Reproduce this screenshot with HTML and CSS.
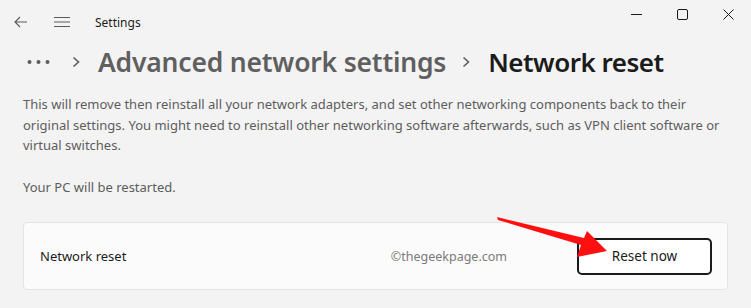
FILE: index.html
```html
<!DOCTYPE html>
<html lang="en">
<head>
<meta charset="utf-8">
<title>Settings</title>
<link rel="stylesheet" href="styles.css">
</head>
<body>
<div class="window">
  <header class="titlebar">
    <button class="tb-btn back" aria-label="Back">
      <svg width="14" height="12" viewBox="0 0 14 12"><path d="M6 1 L1 6 L6 11 M1 6 H13" fill="none" stroke="#5a5a5a" stroke-width="1.1"/></svg>
    </button>
    <button class="tb-btn menu" aria-label="Menu">
      <svg width="16" height="12" viewBox="0 0 16 12"><path d="M0 1.5 H16 M0 6 H16 M0 10.5 H16" fill="none" stroke="#5a5a5a" stroke-width="1.1"/></svg>
    </button>
    <span class="app-title">Settings</span>
    <div class="controls">
      <span class="ctl"><svg width="11" height="11" viewBox="0 0 11 11"><path d="M0 5.5 H11" stroke="#1a1a1a" stroke-width="1"/></svg></span>
      <span class="ctl"><svg width="11" height="11" viewBox="0 0 11 11"><rect x="0.5" y="0.5" width="10" height="10" rx="1.5" fill="none" stroke="#1a1a1a" stroke-width="1"/></svg></span>
      <span class="ctl"><svg width="11" height="11" viewBox="0 0 11 11"><path d="M0.5 0.5 L10.5 10.5 M10.5 0.5 L0.5 10.5" stroke="#1a1a1a" stroke-width="1"/></svg></span>
    </div>
  </header>

  <nav class="crumbs">
    <span class="more" aria-label="More">
      <svg width="24" height="6" viewBox="0 0 24 6"><circle cx="2.5" cy="3" r="2" fill="#5c5c5c"/><circle cx="11.5" cy="3" r="2" fill="#5c5c5c"/><circle cx="20.5" cy="3" r="2" fill="#5c5c5c"/></svg>
    </span>
    <span class="chev">
      <svg width="8" height="12" viewBox="0 0 8 12"><path d="M1.5 1.5 L6.5 6 L1.5 10.5" fill="none" stroke="#5c5c5c" stroke-width="1.6"/></svg>
    </span>
    <span class="crumb">Advanced network settings</span>
    <span class="chev">
      <svg width="8" height="12" viewBox="0 0 8 12"><path d="M1.5 1.5 L6.5 6 L1.5 10.5" fill="none" stroke="#5c5c5c" stroke-width="1.6"/></svg>
    </span>
    <span class="crumb current">Network reset</span>
  </nav>

  <main class="content">
    <p class="desc">This will remove then reinstall all your network adapters, and set other networking components back to their original settings. You might need to reinstall other networking software afterwards, such as VPN client software or virtual switches.</p>
    <p class="desc restart">Your PC will be restarted.</p>

    <section class="card">
      <span class="card-label">Network reset</span>
      <span class="watermark">©thegeekpage.com</span>
      <button class="reset-btn">Reset now</button>
    </section>
  </main>

  <svg class="annot" width="751" height="308" viewBox="0 0 751 308" aria-hidden="true">
    <polygon points="497,217 584,238 587,231 607,251 577,257 581,245 498,220" fill="#ff1010"/>
  </svg>
</div>
</body>
</html>
```

FILE: styles.css
```css
* { box-sizing: border-box; }
html, body { margin: 0; padding: 0; }
body {
  background: #f3f3f3;
  font-family: "Noto Sans", "Open Sans", sans-serif;
  color: #1b1b1b;
  width: 751px;
  height: 308px;
  overflow: hidden;
}
.window { position: relative; width: 751px; height: 308px; }

.titlebar {
  display: flex;
  align-items: center;
  height: 44px;
  padding-left: 8px;
}
.tb-btn {
  border: 0;
  background: transparent;
  padding: 0;
  display: flex;
  align-items: center;
  justify-content: center;
  height: 28px;
}
.back { width: 26px; }
.menu { width: 24px; margin-left: 16px; }
.app-title {
  margin-left: 21px;
  font-size: 12px;
  color: #1b1b1b;
}
.controls {
  margin-left: auto;
  display: flex;
  align-self: flex-start;
  height: 28px;
}
.ctl {
  width: 46px;
  height: 28px;
  display: flex;
  align-items: center;
  justify-content: center;
}

.crumbs {
  display: flex;
  align-items: center;
  height: 36px;
  padding-left: 27px;
}
.more {
  display: flex;
  align-items: center;
  width: 45px;
}
.chev { display: flex; align-items: center; width: 26px; }
.crumb {
  font-size: 26.5px;
  font-weight: 600;
  color: #5f5f5f;
  margin-right: 16px;
  letter-spacing: -0.2px;
}
.crumb.current { color: #1b1b1b; margin-right: 0; letter-spacing: -0.5px; font-size: 26px; }

.content { padding: 14px 23px 0 23px; }
.desc {
  margin: 0;
  font-size: 13px;
  line-height: 20.5px;
  color: #5d5d5d;
}
.restart { margin-top: 21px; }

.card {
  margin-top: 25px;
  height: 68px;
  background: #fbfbfb;
  border: 1px solid #e5e5e5;
  border-radius: 4px;
  display: flex;
  align-items: center;
  padding: 0 15px 0 16px;
}
.card-label { font-size: 13px; color: #1b1b1b; }
.watermark {
  margin-left: auto;
  margin-right: 70px;
  font-size: 12.5px;
  color: #7a7a7a;
}
.reset-btn {
  width: 135px;
  height: 37px;
  border: 2px solid #1a1a1a;
  border-radius: 5px;
  background: #fff;
  font-family: inherit;
  font-size: 13.5px;
  color: #1b1b1b;
}

.annot { position: absolute; left: 0; top: 0; pointer-events: none; }
```
